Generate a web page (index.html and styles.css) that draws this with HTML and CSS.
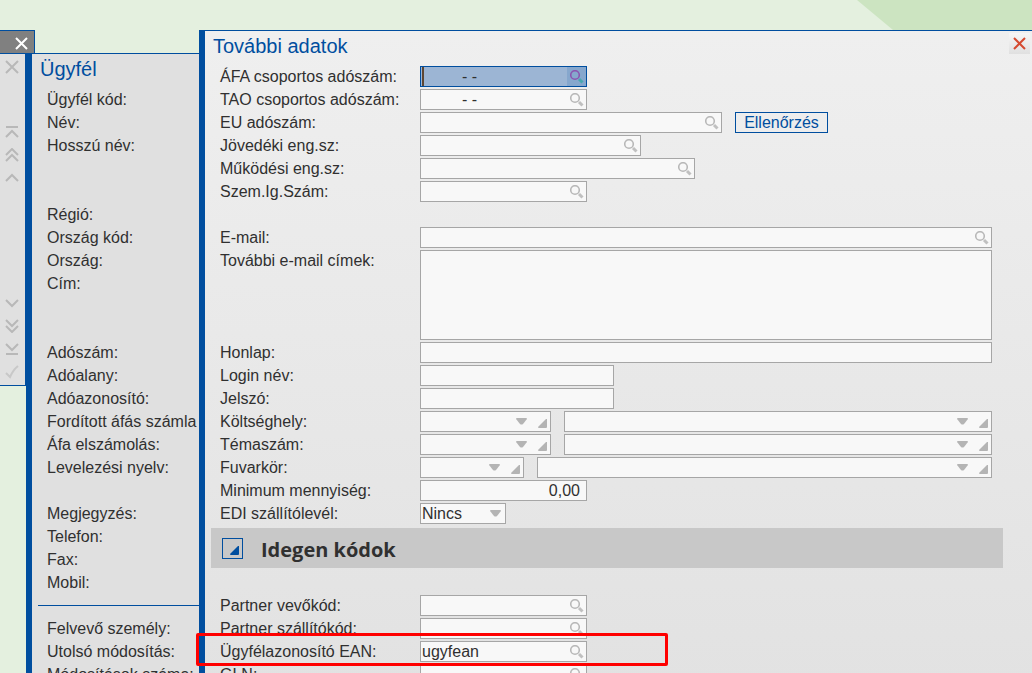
FILE: index.html
```html
<!DOCTYPE html>
<html lang="hu">

<head>
    <meta charset="UTF-8">
    <meta name="viewport" content="width=device-width, initial-scale=1.0">
    <title>További adatok</title>
    <link rel="stylesheet" href="styles.css">
</head>

<body>
    <!-- Shared icons -->
    <svg class="sprite" aria-hidden="true">
        <symbol id="search" viewBox="0 0 14 14">
            <circle class="lens" cx="5" cy="5" r="4.300" />
            <path class="handle" d="M9 9l3.500 3.500" />
        </symbol>
        <symbol id="arrow" viewBox="0 0 11 7">
            <path d="M1 0h9q1 0 1 1L7 6q-1.500 1-3 0L0 1q0-1 1-1z" />
        </symbol>
        <symbol id="corner" viewBox="0 0 9 9">
            <path d="M9 0v8q0 1-1 1H1q-1 0-1-1L8 0z" />
        </symbol>
    </svg>

    <div class="desktop">
        <svg class="backdrop" width="175" height="30" aria-hidden="true">
            <path d="M0 0h175v30H36z" />
        </svg>

        <!-- Toolbar -->
        <div class="toolbar">
            <button class="tab" aria-label="Bezárás">
                <svg width="13" height="13" viewBox="0 0 13 13"><path d="M1 1l11 11M12 1L1 12" /></svg>
            </button>
            <div class="tools">
                <button aria-label="Mégsem"><svg width="14" height="14" viewBox="0 0 14 14"><path d="M1 1l12 12M13 1L1 13" /></svg></button>
                <div class="tool-group up">
                    <button aria-label="Első"><svg width="14" height="14" viewBox="0 0 14 14"><path d="M1 2h12M1 12l6-6 6 6" /></svg></button>
                    <button aria-label="Lapozás fel"><svg width="14" height="14" viewBox="0 0 14 14"><path d="M1 7l6-6 6 6M1 13l6-6 6 6" /></svg></button>
                    <button aria-label="Előző"><svg width="14" height="14" viewBox="0 0 14 14"><path d="M1 10l6-6 6 6" /></svg></button>
                </div>
                <div class="tool-group down">
                    <button aria-label="Következő"><svg width="14" height="14" viewBox="0 0 14 14"><path d="M1 4l6 6 6-6" /></svg></button>
                    <button aria-label="Lapozás le"><svg width="14" height="14" viewBox="0 0 14 14"><path d="M1 1l6 6 6-6M1 7l6 6 6-6" /></svg></button>
                    <button aria-label="Utolsó"><svg width="14" height="14" viewBox="0 0 14 14"><path d="M1 2l6 6 6-6M1 12h12" /></svg></button>
                    <button class="faded" aria-label="Rendben"><svg width="14" height="14" viewBox="0 0 14 14"><path d="M1 8l4 4q3-7 8-11" /></svg></button>
                </div>
            </div>
        </div>

        <!-- Client window -->
        <div class="window client">
            <h2 class="title">Ügyfél</h2>
            <ul class="names">
                <li>Ügyfél kód:</li>
                <li>Név:</li>
                <li class="tall">Hosszú név:</li>
                <li>Régió:</li>
                <li>Ország kód:</li>
                <li>Ország:</li>
                <li class="tall">Cím:</li>
                <li>Adószám:</li>
                <li>Adóalany:</li>
                <li>Adóazonosító:</li>
                <li>Fordított áfás számla</li>
                <li>Áfa elszámolás:</li>
                <li class="spaced">Levelezési nyelv:</li>
                <li>Megjegyzés:</li>
                <li>Telefon:</li>
                <li>Fax:</li>
                <li>Mobil:</li>
            </ul>
            <hr>
            <ul class="names">
                <li>Felvevő személy:</li>
                <li>Utolsó módosítás:</li>
                <li>Módosítások száma:</li>
            </ul>
        </div>

        <!-- Additional data window -->
        <form class="window details">
            <div class="header">
                <h2 class="title">További adatok</h2>
                <button type="button" class="close" aria-label="Bezárás">
                    <svg width="13" height="13" viewBox="0 0 13 13"><path d="M1 1l11 11M12 1L1 12" /></svg>
                </button>
            </div>

            <div class="rows">
                <div class="row">
                    <label for="afa">ÁFA csoportos adószám:</label>
                    <div class="field w-code active">
                        <input class="masked" type="text" id="afa" value="-&nbsp;-">
                        <button type="button" class="search" aria-label="Keresés"><svg><use href="#search" /></svg></button>
                    </div>
                </div>
                <div class="row">
                    <label for="tao">TAO csoportos adószám:</label>
                    <div class="field w-code">
                        <input class="masked" type="text" id="tao" value="-&nbsp;-">
                        <button type="button" class="search" aria-label="Keresés"><svg><use href="#search" /></svg></button>
                    </div>
                </div>
                <div class="row">
                    <label for="eu">EU adószám:</label>
                    <div class="field w-eu">
                        <input type="text" id="eu">
                        <button type="button" class="search" aria-label="Keresés"><svg><use href="#search" /></svg></button>
                    </div>
                    <button type="button" class="check">Ellenőrzés</button>
                </div>
                <div class="row">
                    <label for="jovedeki">Jövedéki eng.sz:</label>
                    <div class="field w-excise">
                        <input type="text" id="jovedeki">
                        <button type="button" class="search" aria-label="Keresés"><svg><use href="#search" /></svg></button>
                    </div>
                </div>
                <div class="row">
                    <label for="mukodesi">Működési eng.sz:</label>
                    <div class="field w-permit">
                        <input type="text" id="mukodesi">
                        <button type="button" class="search" aria-label="Keresés"><svg><use href="#search" /></svg></button>
                    </div>
                </div>
                <div class="row spaced">
                    <label for="szemig">Szem.Ig.Szám:</label>
                    <div class="field w-code">
                        <input type="text" id="szemig">
                        <button type="button" class="search" aria-label="Keresés"><svg><use href="#search" /></svg></button>
                    </div>
                </div>
                <div class="row">
                    <label for="email">E-mail:</label>
                    <div class="field w-full">
                        <input type="email" id="email">
                        <button type="button" class="search" aria-label="Keresés"><svg><use href="#search" /></svg></button>
                    </div>
                </div>
                <div class="row">
                    <label for="emails">További e-mail címek:</label>
                    <textarea class="field w-full" id="emails"></textarea>
                </div>
                <div class="row">
                    <label for="honlap">Honlap:</label>
                    <div class="field w-full"><input type="text" id="honlap"></div>
                </div>
                <div class="row">
                    <label for="login">Login név:</label>
                    <div class="field w-login"><input type="text" id="login"></div>
                </div>
                <div class="row">
                    <label for="jelszo">Jelszó:</label>
                    <div class="field w-login"><input type="password" id="jelszo"></div>
                </div>
                <div class="row">
                    <label for="koltseghely">Költséghely:</label>
                    <div class="field w-combo">
                        <select id="koltseghely"><option></option></select>
                        <svg class="arrow"><use href="#arrow" /></svg>
                        <button type="button" class="corner" aria-label="Megnyitás"><svg><use href="#corner" /></svg></button>
                    </div>
                    <div class="field w-full">
                        <select aria-label="Költséghely neve"><option></option></select>
                        <svg class="arrow"><use href="#arrow" /></svg>
                        <button type="button" class="corner" aria-label="Megnyitás"><svg><use href="#corner" /></svg></button>
                    </div>
                </div>
                <div class="row">
                    <label for="temaszam">Témaszám:</label>
                    <div class="field w-combo">
                        <select id="temaszam"><option></option></select>
                        <svg class="arrow"><use href="#arrow" /></svg>
                        <button type="button" class="corner" aria-label="Megnyitás"><svg><use href="#corner" /></svg></button>
                    </div>
                    <div class="field w-full">
                        <select aria-label="Témaszám neve"><option></option></select>
                        <svg class="arrow"><use href="#arrow" /></svg>
                        <button type="button" class="corner" aria-label="Megnyitás"><svg><use href="#corner" /></svg></button>
                    </div>
                </div>
                <div class="row">
                    <label for="fuvarkor">Fuvarkör:</label>
                    <div class="field w-route">
                        <select id="fuvarkor"><option></option></select>
                        <svg class="arrow"><use href="#arrow" /></svg>
                        <button type="button" class="corner" aria-label="Megnyitás"><svg><use href="#corner" /></svg></button>
                    </div>
                    <div class="field w-full">
                        <select aria-label="Fuvarkör neve"><option></option></select>
                        <svg class="arrow"><use href="#arrow" /></svg>
                        <button type="button" class="corner" aria-label="Megnyitás"><svg><use href="#corner" /></svg></button>
                    </div>
                </div>
                <div class="row">
                    <label for="minimum">Minimum mennyiség:</label>
                    <div class="field w-code"><input class="number" type="text" id="minimum" value="0,00"></div>
                </div>
                <div class="row">
                    <label for="edi">EDI szállítólevél:</label>
                    <div class="field w-edi">
                        <select id="edi"><option>Nincs</option></select>
                        <svg class="arrow"><use href="#arrow" /></svg>
                    </div>
                </div>
            </div>

            <!-- Foreign codes -->
            <div class="section">
                <button type="button" class="toggle" aria-label="Összecsukás"><svg><use href="#corner" /></svg></button>
                <h3>Idegen kódok</h3>
            </div>

            <div class="rows">
                <div class="row">
                    <label for="vevokod">Partner vevőkód:</label>
                    <div class="field w-code">
                        <input type="text" id="vevokod">
                        <button type="button" class="search" aria-label="Keresés"><svg><use href="#search" /></svg></button>
                    </div>
                </div>
                <div class="row">
                    <label for="szallitokod">Partner szállítókód:</label>
                    <div class="field w-code">
                        <input type="text" id="szallitokod">
                        <button type="button" class="search" aria-label="Keresés"><svg><use href="#search" /></svg></button>
                    </div>
                </div>
                <div class="row marked">
                    <label for="ean">Ügyfélazonosító EAN:</label>
                    <div class="field w-code">
                        <input type="text" id="ean" value="ugyfean">
                        <button type="button" class="search" aria-label="Keresés"><svg><use href="#search" /></svg></button>
                    </div>
                </div>
                <div class="row">
                    <label for="gln">GLN:</label>
                    <div class="field w-code">
                        <input type="text" id="gln">
                        <button type="button" class="search" aria-label="Keresés"><svg><use href="#search" /></svg></button>
                    </div>
                </div>
            </div>
        </form>
    </div>
</body>

</html>
```

FILE: styles.css
```css
/* Reset & Fonts */
*,
*::after {
    margin: 0;
    padding: 0;
    box-sizing: border-box;
}

body,
button,
input,
select,
textarea {
    font-family: "Liberation Sans", Arial, sans-serif;
    font-size: 16px;
    color: #303030;
}

button {
    display: flex;
    align-items: center;
    justify-content: center;
    border: none;
    background: none;
    cursor: pointer;
}

.sprite {
    position: absolute;
    width: 0;
    height: 0;
}

/* Desktop */
.desktop {
    position: relative;
    display: flex;
    align-items: flex-start;
    height: 100vh;
    padding-top: 30px;
    overflow: hidden;
    background-color: #e4f0df;
}

.backdrop {
    position: absolute;
    top: 0;
    right: 0;
    fill: #cce4c1;
}

/* Toolbar */
.toolbar {
    flex: 0 0 26px;
    width: 26px;
    z-index: 1;
}

.tab {
    width: 35px;
    height: 24px;
    padding-left: 8px;
    padding-top: 3px;
    background-color: #808080;
    border: solid #004e9f;
    border-width: 1px 1px 1px 0;
}

.tab svg {
    fill: none;
    stroke: #fff;
    stroke-width: 2;
}

.tools {
    padding: 1px 0 2px;
    background-color: #e0e0e0;
    border: solid #004e9f;
    border-width: 0 1px 1px 0;
}

.tools button {
    width: 24px;
    height: 23px;
}

.tools svg {
    fill: none;
    stroke: #b8b8b8;
    stroke-width: 2;
}

.tools .faded svg {
    stroke: #c8c8c8;
}

.tool-group.up {
    margin-top: 42px;
}

.tool-group.down {
    margin-top: 102px;
}

/* Windows */
.window {
    border-left: 6px solid #004e9f;
    border-top: 1px solid #004e9f;
}

.title {
    height: 35px;
    padding-left: 8px;
    line-height: 30px;
    font-size: 20px;
    font-weight: normal;
    color: #004e9f;
}

.client {
    flex: 0 0 173px;
    width: 173px;
    height: 100%;
    margin-top: 23px;
    overflow: hidden;
    white-space: nowrap;
    background-color: #e0e0e0;
}

.names {
    padding-left: 15px;
    list-style: none;
}

.names li {
    height: 23px;
    line-height: 21px;
}

.names .spaced {
    height: 46px;
}

.names .tall {
    height: 69px;
}

.client hr {
    height: 1px;
    margin: 10px 0 12px 6px;
    border: none;
    background-color: #004e9f;
}

.details {
    flex: 1;
    min-width: 0;
    z-index: 2;
    background: linear-gradient(#efefef, #e2e2e2);
}

.header {
    display: flex;
    justify-content: space-between;
    padding-right: 2px;
}

.close {
    width: 21px;
    height: 21px;
    margin-top: 2px;
    background: linear-gradient(#f6f6f6, #e0e0e0);
}

.close svg {
    fill: none;
    stroke: #d54a30;
    stroke-width: 2;
}

/* Form rows */
.rows {
    display: flex;
    flex-direction: column;
    gap: 2px;
    padding: 0 40px 0 15px;
}

.row {
    display: flex;
    gap: 13px;
}

.row.spaced {
    margin-bottom: 23px;
}

.row label {
    flex: 0 0 200px;
    margin-right: -13px;
    line-height: 21px;
}

/* Fields */
.field {
    display: flex;
    align-items: center;
    height: 21px;
    background-color: #f8f8f8;
    border: 1px solid #a6a6a6;
}

textarea.field {
    height: 90px;
    resize: none;
}

.w-code { width: 167px; }
.w-eu { width: 302px; }
.w-excise { width: 221px; }
.w-permit { width: 275px; }
.w-login { width: 194px; }
.w-combo { width: 131px; }
.w-route { width: 104px; }
.w-edi { width: 86px; }
.w-full { flex: 1; }

.field input,
.field select {
    flex: 1;
    min-width: 0;
    height: 19px;
    padding: 0 1px;
    border: none;
    outline: none;
    appearance: none;
    background: none;
}

.field .masked {
    padding-left: 41px;
}

.field .number {
    padding-right: 6px;
    text-align: right;
}

.search {
    width: 19px;
    height: 19px;
}

.search svg {
    width: 14px;
    height: 14px;
    fill: none;
}

.lens {
    stroke: var(--lens, #b8b8b8);
    stroke-width: 1.6;
}

.handle {
    stroke: var(--handle, #c0c0c0);
    stroke-width: 3;
}

.active {
    --lens: #8a55b0;
    --handle: #48a8b0;
    background-color: #9cb5d4;
    border-color: #004e9f;
}

.field.active .masked {
    margin-left: 1px;
    padding-left: 38px;
    border-left: 2px solid #5e4632;
}

.active .search {
    background-color: #86a7cd;
}

.arrow {
    width: 11px;
    height: 7px;
    margin-right: 4px;
    fill: #b4b4b4;
    pointer-events: none;
}

.corner {
    width: 19px;
    height: 19px;
    padding: 4px 3px 0 7px;
}

.corner svg {
    width: 9px;
    height: 9px;
    fill: #b4b4b4;
}

.check {
    width: 93px;
    height: 21px;
    color: #004e9f;
    border: 1px solid #004e9f;
}

/* Section bar */
.section {
    display: flex;
    align-items: center;
    gap: 18px;
    height: 40px;
    margin: 4px 29px 27px 6px;
    padding-left: 11px;
    background-color: #c8c8c8;
}

.section h3 {
    padding-top: 2px;
    font-family: "Open Sans", "Noto Sans", sans-serif;
    font-size: 20px;
    font-weight: bold;
}

.toggle {
    width: 21px;
    height: 21px;
    padding: 5px 0 0 4px;
    border: 1px solid #004e9f;
}

.toggle svg {
    width: 9px;
    height: 9px;
    fill: #004e9f;
}

/* Red frame round the highlighted row */
.marked {
    position: relative;
    z-index: 1;
}

.marked::after {
    content: "";
    position: absolute;
    top: -8px;
    left: -24px;
    width: 472px;
    height: 33px;
    border: 3px solid #f00;
    border-radius: 2px;
    pointer-events: none;
}
```
